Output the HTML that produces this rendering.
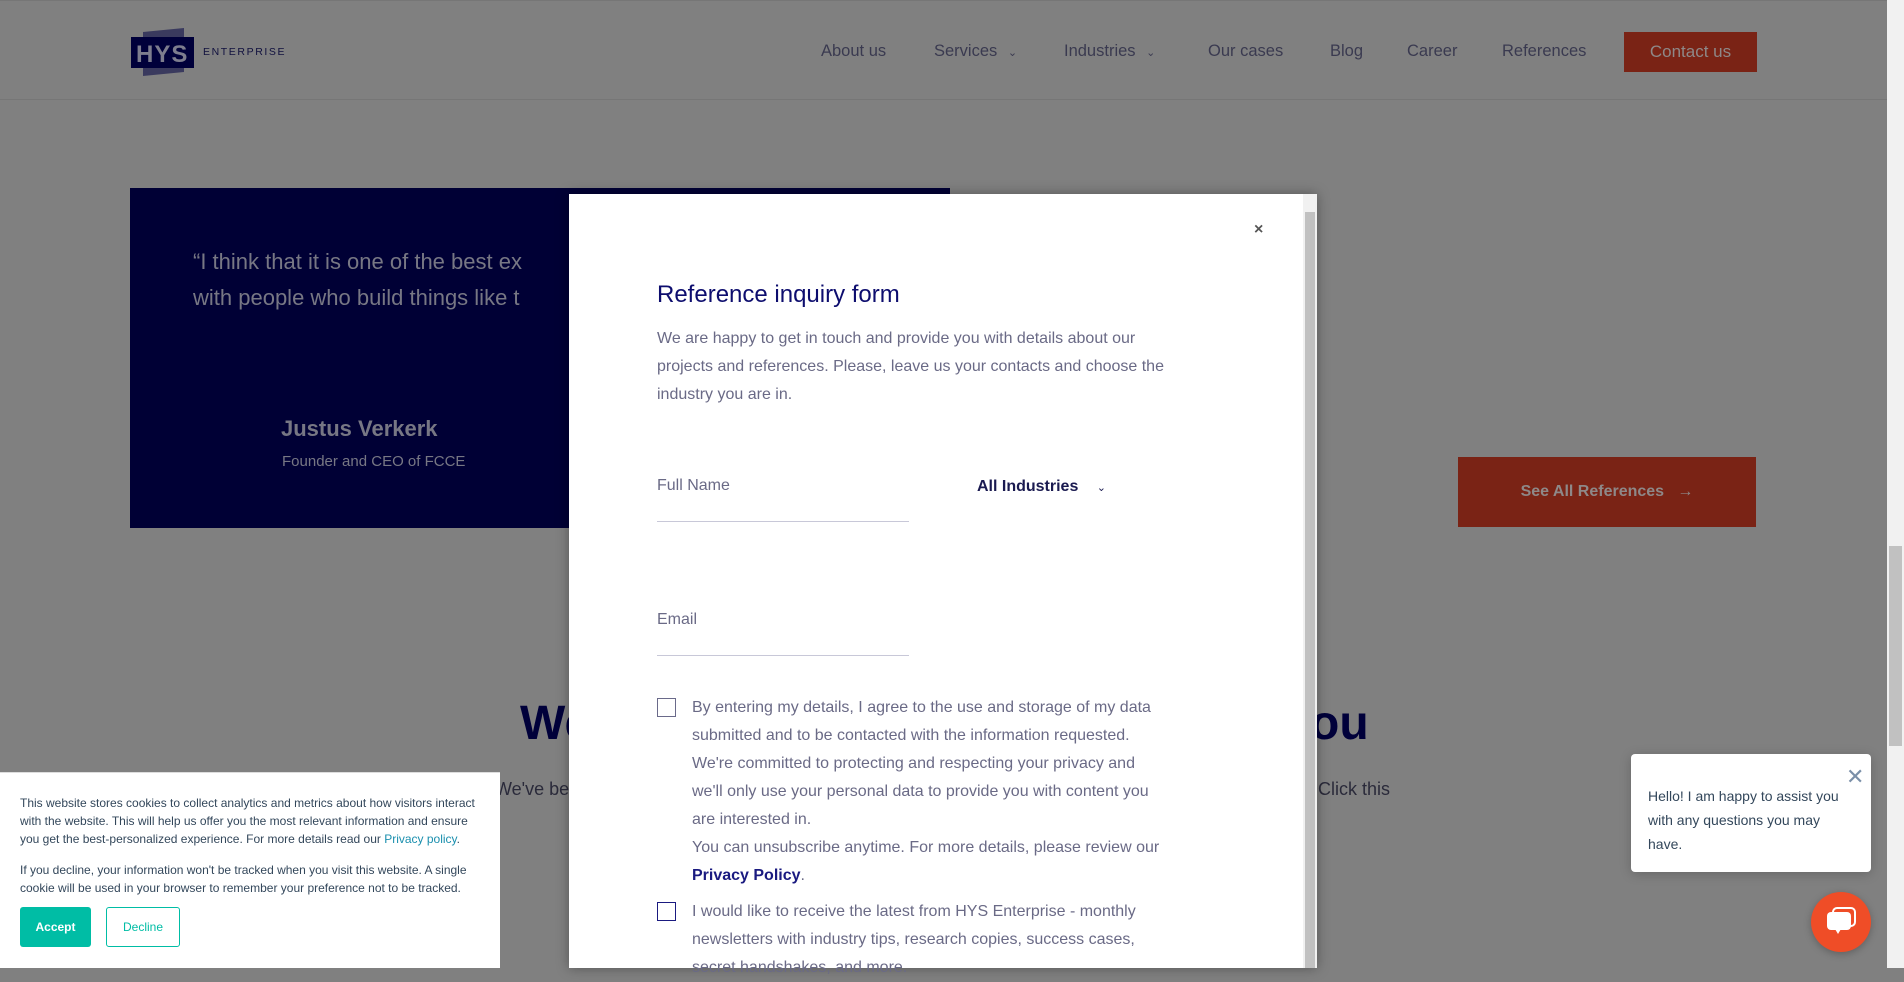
<!DOCTYPE html>
<html><head><meta charset="utf-8">
<style>
*{margin:0;padding:0;box-sizing:border-box}
body{width:1904px;height:968px;overflow:hidden;position:relative;background:#808080;font-family:"Liberation Sans",sans-serif}
.a{position:absolute;white-space:nowrap}
.nav{font-size:16.5px;color:#3a3a50;top:42px}
.mt{color:#6a6a86;font-size:16px}
</style></head><body>
<!-- header -->
<div class="a" style="left:0;top:0;width:1887px;height:100px;border-bottom:1px solid #767676;border-top:1px solid #767676"></div>
<svg class="a" style="left:131px;top:28px" width="64" height="48"><polygon points="12,4 53,0 53,44 12,48" fill="#3a3a5e"/><rect x="0" y="9" width="63" height="31" fill="#00003a"/><text x="5" y="34" font-family="Liberation Sans" font-weight="bold" font-size="24" fill="#7d7d8e" letter-spacing="1">HYS</text></svg>
<div class="a" style="left:203px;top:46px;font-size:10.5px;letter-spacing:1.6px;color:#10103e">ENTERPRISE</div>
<div class="a nav" style="left:821px">About us</div>
<div class="a nav" style="left:934px">Services <span style="font-size:11px;margin-left:6px">&#8964;</span></div>
<div class="a nav" style="left:1064px">Industries <span style="font-size:11px;margin-left:6px">&#8964;</span></div>
<div class="a nav" style="left:1208px">Our cases</div>
<div class="a nav" style="left:1330px">Blog</div>
<div class="a nav" style="left:1407px">Career</div>
<div class="a nav" style="left:1502px">References</div>
<div class="a" style="left:1624px;top:32px;width:133px;height:40px;background:#7a2315;color:#8e8888;font-size:17px;text-align:center;line-height:40px">Contact us</div>
<!-- card -->
<div class="a" style="left:130px;top:188px;width:820px;height:340px;background:#000035"></div>
<div class="a" style="left:193px;top:244px;font-size:22px;line-height:36px;color:#777784">“I think that it is one of the best ex<br>with people who build things like t</div>
<div class="a" style="left:281px;top:416px;font-size:22px;font-weight:bold;color:#777784">Justus Verkerk</div>
<div class="a" style="left:282px;top:453px;font-size:15px;color:#777784">Founder and CEO of FCCE</div>
<div class="a" style="left:1458px;top:457px;width:298px;height:70px;background:#7a2315;color:#8e8888;font-size:16px;font-weight:bold;text-align:center;line-height:70px">See All References &nbsp;&nbsp;→</div>
<div class="a" style="left:520px;top:696px;font-size:48px;font-weight:bold;color:#00003a">We</div>
<div class="a" style="left:1310px;top:696px;font-size:48px;font-weight:bold;color:#00003a">ou</div>
<div class="a" style="left:495px;top:779px;font-size:18px;color:#2a2a3a">We've bee</div>
<div class="a" style="left:1318px;top:779px;font-size:18px;color:#2a2a3a">Click this</div>
<!-- modal -->
<div class="a" style="left:569px;top:194px;width:748px;height:774px;background:#fff;box-shadow:0 0 12px rgba(0,0,0,.35)"></div>
<div class="a" style="left:1303px;top:194px;width:14px;height:774px;background:#f1f1f1"></div>
<div class="a" style="left:1305px;top:212px;width:10px;height:756px;background:#c1c1c1"></div>
<div class="a" style="left:1254px;top:221px;font-size:16px;color:#555;font-weight:bold">×</div>
<div class="a" style="left:657px;top:281px;font-size:24px;color:#0d0d6e">Reference inquiry form</div>
<div class="a mt" style="left:657px;top:325px;line-height:28px">We are happy to get in touch and provide you with details about our<br>projects and references. Please, leave us your contacts and choose the<br>industry you are in.</div>
<div class="a mt" style="left:657px;top:477px">Full Name</div>
<div class="a" style="left:657px;top:521px;width:252px;height:1px;background:#c8c8d8"></div>
<div class="a" style="left:977px;top:478px;font-size:16px;color:#1a1a50;font-weight:bold">All Industries <span style="font-size:11px;margin-left:14px;font-weight:normal">&#8964;</span></div>
<div class="a mt" style="left:657px;top:611px">Email</div>
<div class="a" style="left:657px;top:655px;width:252px;height:1px;background:#c8c8d8"></div>
<div class="a" style="left:657px;top:698px;width:19px;height:19px;border:1.5px solid #6a6a8a"></div>
<div class="a mt" style="left:692px;top:694px;line-height:28px">By entering my details, I agree to the use and storage of my data<br>submitted and to be contacted with the information requested.<br>We're committed to protecting and respecting your privacy and<br>we'll only use your personal data to provide you with content you<br>are interested in.<br>You can unsubscribe anytime. For more details, please review our<br><b style="color:#1a1a80">Privacy Policy</b>.</div>
<div class="a" style="left:657px;top:902px;width:19px;height:19px;border:1.5px solid #1a1a80"></div>
<div class="a mt" style="left:692px;top:898px;line-height:28px">I would like to receive the latest from HYS Enterprise - monthly<br>newsletters with industry tips, research copies, success cases,<br>secret handshakes, and more.</div>
<!-- cookie -->
<div class="a" style="left:0;top:772px;width:500px;height:196px;background:#fff;border-top:1px solid #ddd"></div>
<div class="a" style="left:20px;top:794px;font-size:12px;line-height:18px;color:#33475b">This website stores cookies to collect analytics and metrics about how visitors interact<br>with the website. This will help us offer you the most relevant information and ensure<br>you get the best-personalized experience. For more details read our <span style="color:#1a8fae">Privacy policy</span>.</div>
<div class="a" style="left:20px;top:861px;font-size:12px;line-height:18px;color:#33475b">If you decline, your information won't be tracked when you visit this website. A single<br>cookie will be used in your browser to remember your preference not to be tracked.</div>
<div class="a" style="left:20px;top:907px;width:71px;height:40px;background:#00bda5;border-radius:3px;color:#fff;font-size:12px;font-weight:bold;text-align:center;line-height:40px">Accept</div>
<div class="a" style="left:106px;top:907px;width:74px;height:40px;border:1px solid #00bda5;border-radius:3px;color:#00bda5;font-size:12px;text-align:center;line-height:38px">Decline</div>
<!-- chat -->
<div class="a" style="left:1631px;top:754px;width:240px;height:118px;background:#fff;border-radius:4px;box-shadow:0 2px 12px rgba(0,0,0,.2)"></div>
<div class="a" style="left:1846px;top:764px;font-size:22px;color:#7a8fa8">✕</div>
<div class="a" style="left:1648px;top:784px;font-size:14px;line-height:24px;color:#33475b">Hello! I am happy to assist you<br>with any questions you may<br>have.</div>
<div class="a" style="left:1811px;top:892px;width:60px;height:60px;border-radius:50%;background:#ef4d27;box-shadow:0 2px 8px rgba(0,0,0,.25)"></div>
<svg class="a" style="left:1825px;top:906px" width="32" height="32"><rect x="8" y="2" width="22" height="18" rx="4" fill="none" stroke="#fff" stroke-width="2"/><rect x="2" y="6" width="24" height="18" rx="4" fill="#fff"/><polygon points="10,23 16,23 13,28" fill="#fff"/></svg>
<!-- page scrollbar -->
<div class="a" style="left:1887px;top:0;width:17px;height:968px;background:#f1f1f1"></div>
<div class="a" style="left:1889px;top:546px;width:13px;height:200px;background:#c1c1c1"></div>
</body></html>
